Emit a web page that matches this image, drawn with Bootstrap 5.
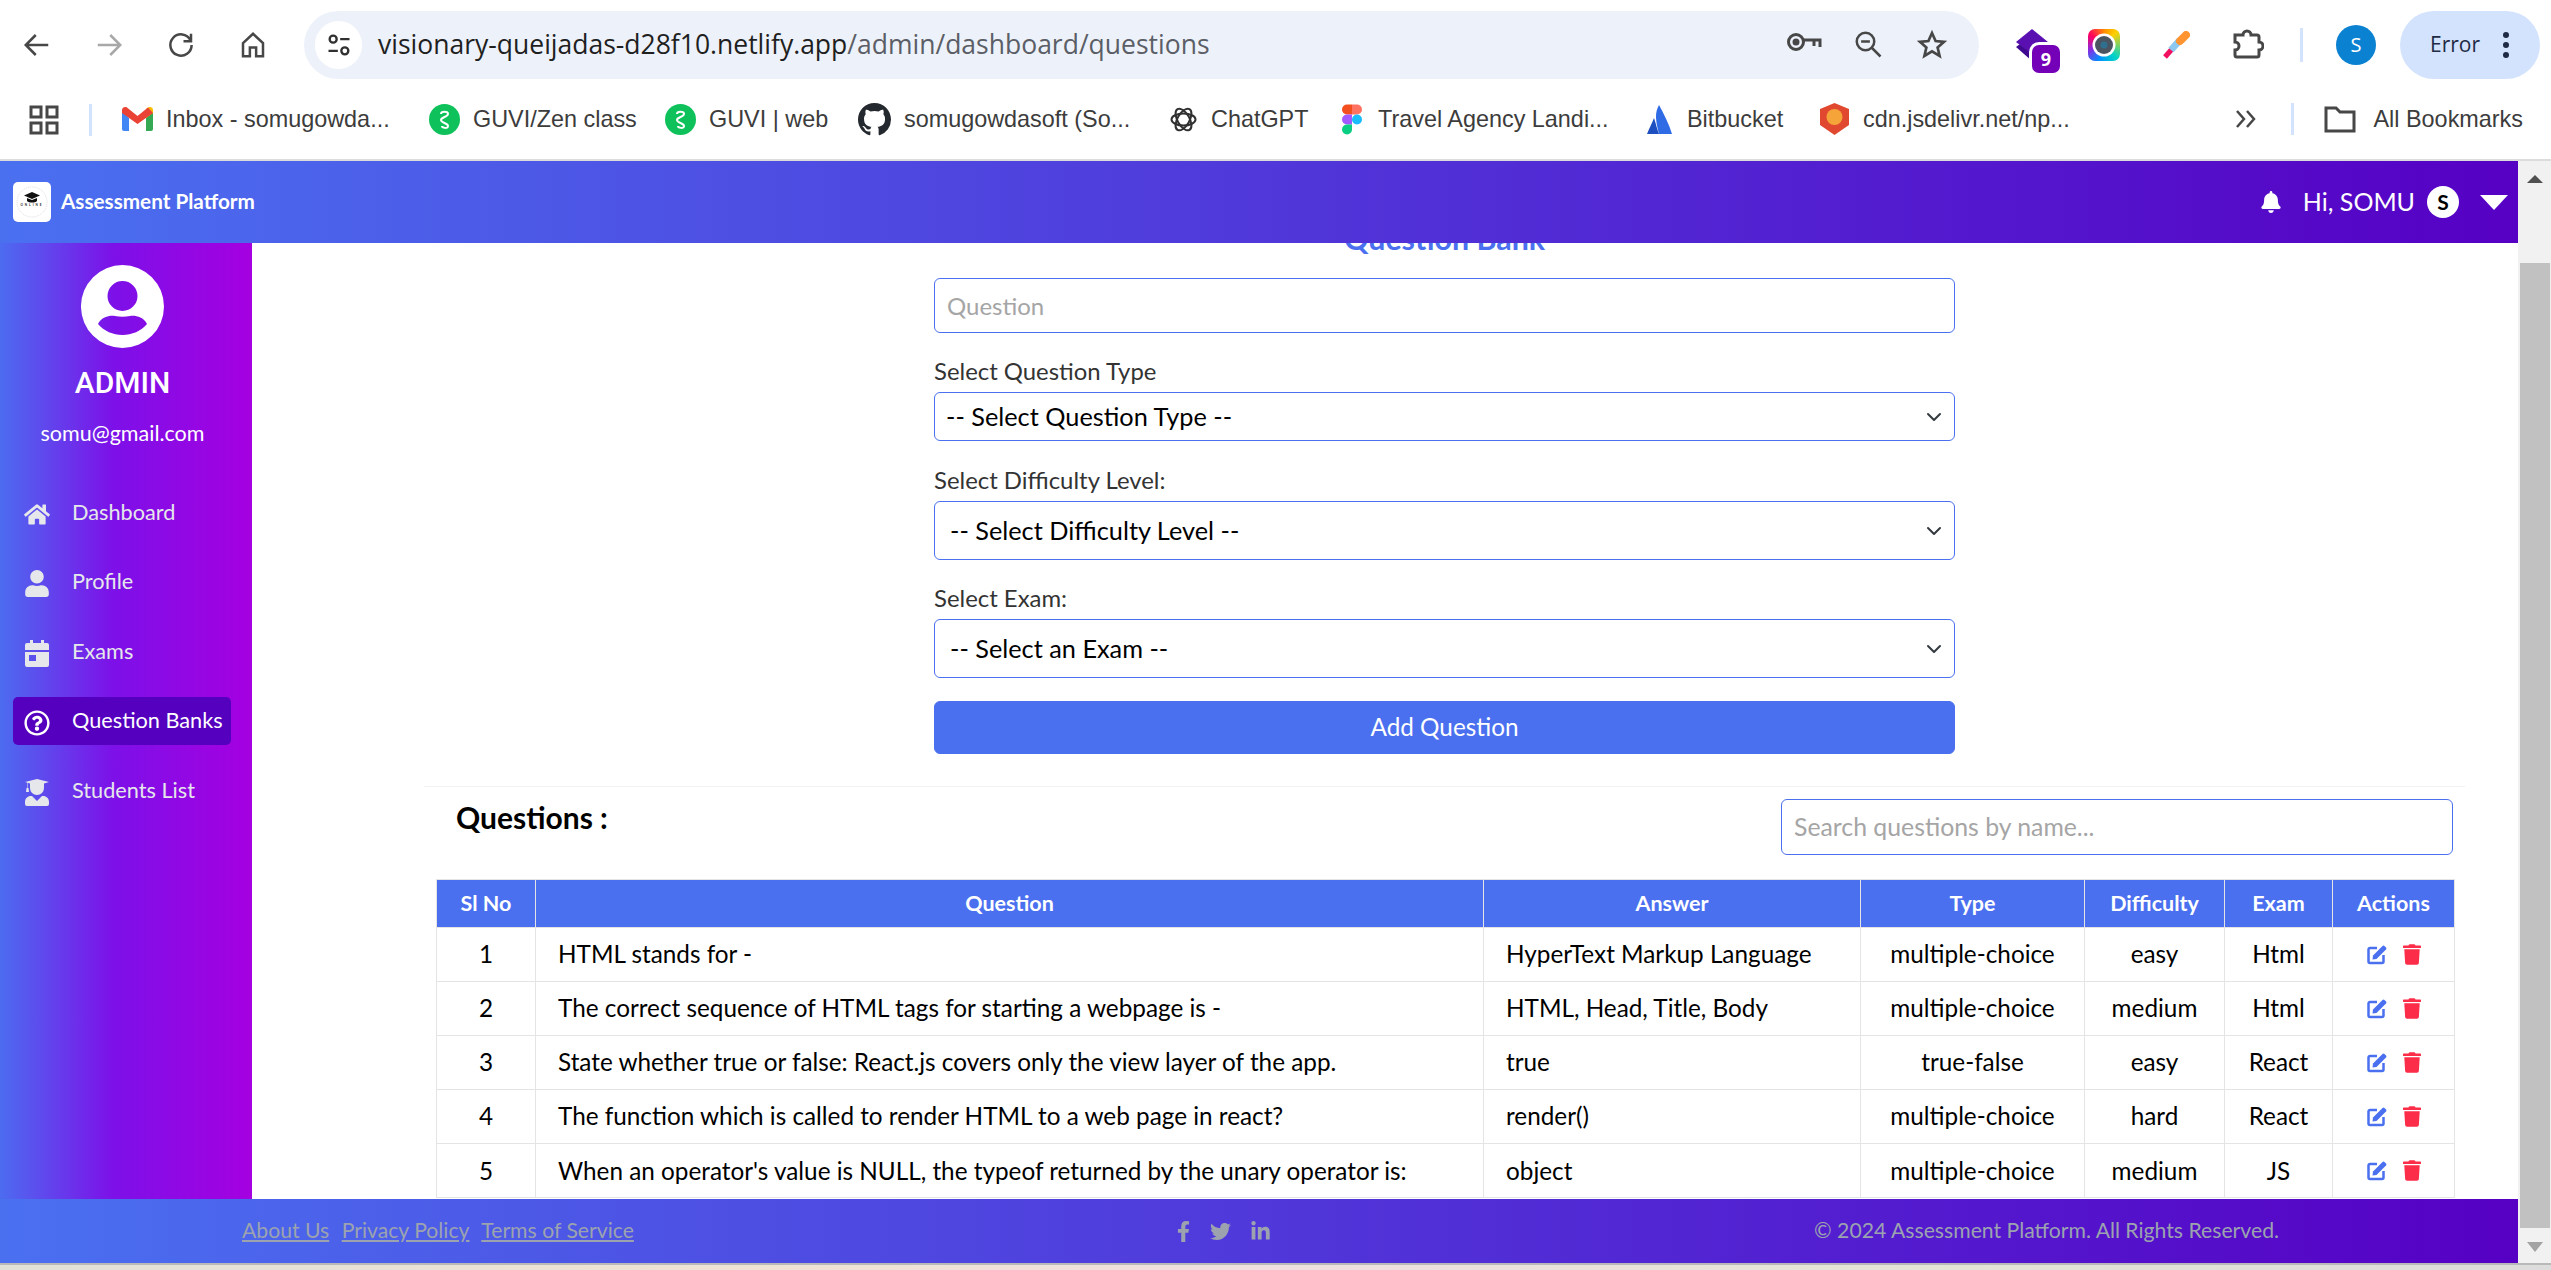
<!DOCTYPE html>
<html lang="en">
  <head>
    <meta charset="UTF-8" />
    <meta name="viewport" content="width=device-width, initial-scale=1" />
    <title>Question Bank</title>
    <link href="https://cdn.jsdelivr.net/npm/bootstrap@5.3.0/dist/css/bootstrap.min.css" rel="stylesheet" />
    <style>
      html, body { height: 100%; overflow: hidden; }
      body { font-family: Lato, "Liberation Sans", sans-serif; background: #fff; color: #000; }
      .screen { height: 100vh; }
      .fill-y { min-height: 0; }
      .fill-x { min-width: 0; }

      /* browser chrome */
      .tabbar { height: 90px; flex: none; font-family: "Open Sans", "Liberation Sans", sans-serif; }
      .tb-slot { width: 72px; flex: none; color: #474747; }
      .tb-first { margin-left: 1px; }
      .addr { width: 1675px; height: 68px; flex: none; margin-left: 15px; background: #edf2fa; border-radius: 34px; padding: 0 15px 0 11px; }
      .addr-site { width: 47px; height: 48px; background: #fff; border-radius: 24px; flex: none; }
      .addr-url { margin-left: 16px; font-size: 26.5px; color: #1f1f1f; white-space: nowrap; }
      .addr-url span { color: #5b5e66; }
      .addr-slot { width: 64px; color: #474747; }
      .ext-row { margin-left: 17px; }
      .ext-badge { position: absolute; right: 8px; bottom: -12px; width: 28px; height: 28px; background: #7400b8; color: #fff; border-radius: 7px; box-shadow: 0 0 0 3px #fff; font-size: 18px; font-weight: 700; line-height: 28px; text-align: center; }
      .cam-ico { width: 32px; height: 32px; border-radius: 7px; background: conic-gradient(#ff8c00, #ffd000 12%, #00d4c8 38%, #0090ff 55%, #8a2be2 70%, #ff0060 85%, #ff8c00); }
      .tb-sep { width: 3px; height: 34px; background: #d3e3fd; margin: 0 33px 0 16px; flex: none; }
      .acct { width: 40px; height: 40px; border-radius: 50%; background: #0b82d1; color: #fff; font-size: 20px; line-height: 40px; text-align: center; flex: none; }
      .err-pill { width: 140px; height: 68px; margin-left: 24px; flex: none; background: #d3e3fd; border-radius: 34px; color: #1f2a44; font-size: 21px; padding: 0 31px 0 30px; }
      .marks { height: 71px; flex: none; padding: 0 0 10px 29px; border-bottom: 2px solid #dcdcdc; font-family: "Liberation Sans", sans-serif; font-size: 23.4px; color: #3c3c3c; white-space: nowrap; }
      .mark-sep { width: 3px; height: 32px; background: #d3e3fd; margin: 0 30px 0 30px; flex: none; }
      .mark-sep-r { margin: 0 30px 0 34px; }
      .mark-item { gap: 13px; flex: none; }
      .mark-item svg { flex: none; }
      .mk-gmail { width: 307px; }
      .mk-zen { width: 236px; }
      .mk-web { width: 193px; }
      .mk-git { width: 312px; }
      .mk-gpt { width: 172px; gap: 14px; }
      .mk-fig { width: 304px; gap: 16px; }
      .mk-bit { width: 174px; gap: 14px; }
      .mk-cdn { gap: 14px; }
      .mark-end { margin-left: 18px; margin-right: 28px; }

      /* app */
      .app-bar { height: 82px; flex: none; background: linear-gradient(90deg, #4a70f0, #5600c4); color: #fff; padding: 0 10px 0 13px; }
      .app-logo { width: 38px; height: 40px; background: #fff; border-radius: 5px; flex: none; }
      .app-name { margin-left: 10px; font-size: 20.7px; font-weight: 700; }
      .hi-name { font-size: 25px; margin-left: 22px; }
      .hi-circle { width: 32px; height: 32px; background: #fff; color: #000; border-radius: 50%; font-weight: 700; font-size: 21px; line-height: 32px; text-align: center; margin-left: 12px; }
      .hi-caret { width: 0; height: 0; border-left: 14px solid transparent; border-right: 14px solid transparent; border-top: 15px solid #fff; margin-left: 21px; }
      .side { width: 252px; flex: none; background: linear-gradient(90deg, #4c6cf0, #7d10e8 45%, #a500e0); color: #fff; padding-top: 22px; }
      .side-top { padding-right: 7px; }
      .side-name { font-family: Roboto, "Liberation Sans", sans-serif; font-size: 30px; font-weight: 500; line-height: 36px; margin-top: 17px; }
      .side-mail { font-size: 21.5px; line-height: 28px; margin-top: 18px; margin-bottom: 41px; }
      .side-link { height: 48px; margin: 0 21px 21.5px 13px; padding-left: 11px; gap: 22px; border-radius: 5px; color: #e5e7eb; font-size: 21.7px; text-decoration: none; white-space: nowrap; }
      .side-link.is-on { background: #5500bf; color: #fff; }
      .side-ico { width: 26px; text-align: center; flex: none; }
      .page-main { overflow: hidden; min-width: 0; }
      .page-inner { margin: 0 53px 0 172px; }
      .bank-title { font-size: 30.4px; line-height: 40px; margin: -25px 0 20px; color: #4a70f0; font-weight: 700; text-align: center; }
      .bank-form { width: 1021px; margin: 0 auto; }
      .bank-form .form-label { display: block; height: 34px; font-size: 23.9px; color: #333; line-height: 34px; margin: -4px 0 4px; }
      .bank-form .form-control, .bank-form .form-select, .find-box { border: 1px solid #4a70f0; border-radius: 6px; color: #000; }
      .bank-form .form-select { font-size: 25.3px; background-position: right 10px center; background-size: 20px 16px; }
      .bank-form .form-control { height: 55px; padding: 0 12px; margin-bottom: 25px; font-size: 24px; }
      .sel-a { height: 49px; padding: 0 40px 0 11px; margin-bottom: 26px; }
      .sel-b { height: 59px; padding: 0 40px 0 15px; margin-bottom: 25px; }
      .bank-form .sel-c { margin-bottom: 22.5px; }
      .form-control::placeholder { color: #a5a5a5; }
      .add-btn { height: 53px; background: #4a70f0; border-color: #4a70f0; color: #fff; border-radius: 6px; font-size: 24.3px; padding: 0; }
      .bank-rule { margin: 32px 0 12px; border-color: #cfcfcf; }
      .list-head { padding: 0 12px 0 32px; margin-bottom: 24px; }
      .list-title { font-size: 30px; font-weight: 700; line-height: 36px; margin: 0; }
      .find-box { width: 672px !important; height: 56px; padding: 0 12px; font-size: 24.8px; }
      .q-wrap { margin: 0 12px; }
      .q-table { table-layout: fixed; width: 2018px; margin: 0; font-size: 24.3px; color: #000; border-color: #e4e4e4; }
      .q-table th { height: 48px; background: #4a70f0; color: #fff; font-size: 21.5px; font-weight: 700; text-align: center; vertical-align: middle; padding: 0; border-color: #e4e4e4; }
      .q-table td { height: 54.2px; vertical-align: middle; padding: 0 22px; white-space: nowrap; }
      .q-table td.mid { text-align: center; padding: 0; }
      .c-no { width: 99px; } .c-q { width: 948px; } .c-ans { width: 377px; } .c-type { width: 224px; } .c-diff { width: 140px; } .c-exam { width: 108px; } .c-act { width: 122px; }
      .act-cell { gap: 15px; }
      .app-foot { height: 64px; flex: none; background: linear-gradient(90deg, #4a70f0, #5600c4); color: #9ca3af; padding: 0 239px 0 242px; font-size: 21.2px; }
      .app-foot a { color: #9ca3af; margin-right: 7px; }
      .foot-links { white-space: nowrap; }
      .foot-links a:last-child { margin-right: 0; }
      .foot-social { gap: 20px; width: 100px; }

      /* fake scrollbar */
      .sbar { width: 33px; flex: none; background: #f1f1f1; position: relative; }
      .sbar-up, .sbar-down { position: absolute; left: 9px; }
      .sbar-up { top: 14px; }
      .sbar-down { bottom: 11px; }
      .sbar-thumb { height: 965px; margin: 102px 1px 0 2px; background: #c1c1c1; }
      .desk-strip { height: 7px; flex: none; border-top: 2px solid #b9b9b9; background: linear-gradient(90deg, #e1e1d8, #efe3d4 30%, #efdfe0 50%, #e3e6d6 75%, #dcdcdc); }
    </style>
  </head>
  <body>
    <div class="screen d-flex flex-column">
      <!-- tab strip -->
      <div class="tabbar d-flex align-items-center">
        <div class="tb-slot tb-first d-flex justify-content-center">
          <svg width="30" height="30" viewBox="0 0 24 24" fill="none" stroke="currentColor" stroke-width="2"><path d="M21 12H4M11 4l-8 8 8 8"/></svg>
        </div>
        <div class="tb-slot d-flex justify-content-center">
          <svg width="30" height="30" viewBox="0 0 24 24" fill="none" stroke="#a8a8a8" stroke-width="2"><path d="M3 12h17M13 4l8 8-8 8"/></svg>
        </div>
        <div class="tb-slot d-flex justify-content-center">
          <svg width="30" height="30" viewBox="0 0 24 24" fill="none" stroke="currentColor" stroke-width="2"><path d="M19.5 8A8.5 8.5 0 1 0 20.5 12"/><path d="M20 3v6h-6"/></svg>
        </div>
        <div class="tb-slot d-flex justify-content-center">
          <svg width="30" height="30" viewBox="0 0 24 24" fill="none" stroke="currentColor" stroke-width="2"><path d="M4 10.5 12 3l8 7.5V21h-5.500v-7h-5v7H4z"/></svg>
        </div>
        <div class="addr d-flex align-items-center">
          <div class="addr-site d-flex align-items-center justify-content-center">
            <svg width="28" height="28" viewBox="0 0 24 24" fill="none" stroke="#303030" stroke-width="2"><circle cx="7" cy="7" r="3"/><path d="M13 7h8M3 17h8"/><circle cx="17" cy="17" r="3"/></svg>
          </div>
          <div class="addr-url">visionary-queijadas-d28f10.netlify.app<span>/admin/dashboard/questions</span></div>
          <div class="ms-auto d-flex">
            <div class="addr-slot d-flex justify-content-center">
              <svg width="36" height="26" viewBox="0 0 36 26" fill="none" stroke="currentColor" stroke-width="3"><circle cx="10" cy="13" r="7.500"/><circle cx="10" cy="13" r="2" fill="currentColor"/><path d="M18 11h16v7M28 11v6"/></svg>
            </div>
            <div class="addr-slot d-flex justify-content-center">
              <svg width="30" height="30" viewBox="0 0 24 24" fill="none" stroke="currentColor" stroke-width="2"><circle cx="10" cy="10" r="7"/><path d="M6.500 10h7M15 15l7 7"/></svg>
            </div>
            <div class="addr-slot d-flex justify-content-center">
              <svg width="32" height="32" viewBox="0 0 24 24" fill="none" stroke="currentColor" stroke-width="2"><path d="m12 3 2.700 6 6.300.6-4.800 4.200 1.500 6.400L12 16.800l-5.700 3.400 1.500-6.400L3 9.600 9.300 9z"/></svg>
            </div>
          </div>
        </div>
        <div class="ext-row d-flex align-items-center">
          <div class="tb-slot d-flex justify-content-center position-relative">
            <svg width="32" height="32" viewBox="0 0 32 32"><path d="M0 18l4-3 12 9 12-9 4 3-16 14z" fill="#3f0a90"/><path d="M16 0 32 13 16 25 0 13z" fill="#5a10b0"/></svg>
            <div class="ext-badge">9</div>
          </div>
          <div class="tb-slot d-flex justify-content-center">
            <div class="cam-ico">
              <svg width="32" height="32" viewBox="0 0 32 32"><circle cx="16" cy="16" r="11.500" fill="#fff"/><circle cx="16" cy="16" r="9" fill="#4a5561"/><circle cx="16" cy="16" r="3.500" fill="#2f6f8f"/></svg>
            </div>
          </div>
          <div class="tb-slot d-flex justify-content-center">
            <svg width="28" height="28" viewBox="0 0 28 28" fill="none"><path d="M3 26l7-8" stroke="#f0105f" stroke-width="5"/><path d="M9 19l9-10" stroke="#8cc8f0" stroke-width="7"/><path d="M18 10l6-6" stroke="#ff9431" stroke-width="8" stroke-linecap="round"/></svg>
          </div>
          <div class="tb-slot d-flex justify-content-center">
            <svg width="32" height="34" viewBox="0 0 32 34" fill="none" stroke="currentColor" stroke-width="3"><path d="M3 7h8a4 4 0 0 1 8 0h6a2 2 0 0 1 2 2v5a4 4 0 0 1 0 8v5a2 2 0 0 1-2 2H5a2 2 0 0 1-2-2v-5a4 4 0 0 0 0-8z"/></svg>
          </div>
        </div>
        <div class="tb-sep"></div>
        <div class="acct">S</div>
        <div class="err-pill d-flex align-items-center justify-content-between">
          <span>Error</span>
          <svg width="6" height="26" viewBox="0 0 6 26" fill="#1f2a44"><circle cx="3" cy="3" r="3"/><circle cx="3" cy="13" r="3"/><circle cx="3" cy="23" r="3"/></svg>
        </div>
      </div>

      <!-- bookmarks -->
      <div class="marks d-flex align-items-center">
        <svg width="30" height="30" viewBox="0 0 30 30" fill="none" stroke="#474747" stroke-width="3"><rect x="2" y="2" width="10" height="10"/><rect x="18" y="2" width="10" height="10"/><rect x="2" y="18" width="10" height="10"/><rect x="18" y="18" width="10" height="10"/></svg>
        <div class="mark-sep"></div>
        <div class="mark-item mk-gmail d-flex align-items-center">
          <svg width="31" height="24" viewBox="0 0 31 24"><path d="M0 3v19a2 2 0 0 0 2 2h5V11z" fill="#4285f4"/><path d="M31 3v19a2 2 0 0 1-2 2h-5V11z" fill="#34a853"/><path d="M24 2v9l7-5V3c0-2.500-3-4-5-2.500z" fill="#fbbc04"/><path d="M0 6l15.500 11L31 6 26 .5 15.500 9 5 .5C3-.5 0 .500 0 3z" fill="#ea4335"/></svg>
          <span>Inbox - somugowda...</span>
        </div>
        <div class="mark-item mk-zen d-flex align-items-center">
          <svg width="31" height="31" viewBox="0 0 31 31"><circle cx="15.500" cy="15.500" r="15.500" fill="#0fc15a"/><path d="M12 10c0-3 7-3 7 0s-7 3-7 6 7 3 7 6-6 2-6 0" fill="none" stroke="#fff" stroke-width="2"/></svg>
          <span>GUVI/Zen class</span>
        </div>
        <div class="mark-item mk-web d-flex align-items-center">
          <svg width="31" height="31" viewBox="0 0 31 31"><circle cx="15.500" cy="15.500" r="15.500" fill="#0fc15a"/><path d="M12 10c0-3 7-3 7 0s-7 3-7 6 7 3 7 6-6 2-6 0" fill="none" stroke="#fff" stroke-width="2"/></svg>
          <span>GUVI | web</span>
        </div>
        <div class="mark-item mk-git d-flex align-items-center">
          <svg width="33" height="33" viewBox="0 0 16 16" fill="#24292f"><path d="M8 0C3.58 0 0 3.58 0 8c0 3.54 2.29 6.53 5.47 7.59.4.07.55-.17.55-.38 0-.19-.01-.82-.01-1.49-2.01.37-2.53-.49-2.69-.94-.09-.23-.48-.94-.82-1.13-.28-.15-.68-.52-.01-.53.63-.01 1.08.58 1.23.82.72 1.21 1.87.87 2.33.66.07-.52.28-.87.51-1.07-1.78-.2-3.64-.89-3.64-3.95 0-.87.31-1.59.82-2.15-.08-.2-.36-1.02.08-2.12 0 0 .67-.21 2.2.82.64-.18 1.32-.27 2-.27.68 0 1.36.09 2 .27 1.53-1.04 2.2-.82 2.2-.82.44 1.1.16 1.92.08 2.12.51.56.82 1.27.82 2.15 0 3.07-1.87 3.75-3.65 3.95.29.25.54.73.54 1.48 0 1.07-.01 1.93-.01 2.2 0 .21.15.46.55.38A8.012 8.012 0 0 0 16 8c0-4.420-3.58-8-8-8z"/></svg>
          <span>somugowdasoft (So...</span>
        </div>
        <div class="mark-item mk-gpt d-flex align-items-center">
          <svg width="27" height="27" viewBox="0 0 27 27" fill="none" stroke="#303030" stroke-width="2"><ellipse cx="13.500" cy="13.500" rx="12" ry="6"/><ellipse cx="13.500" cy="13.500" rx="12" ry="6" transform="rotate(60 13.500 13.500)"/><ellipse cx="13.500" cy="13.500" rx="12" ry="6" transform="rotate(120 13.500 13.500)"/></svg>
          <span>ChatGPT</span>
        </div>
        <div class="mark-item mk-fig d-flex align-items-center">
          <svg width="20" height="31" viewBox="0 0 20 30"><path d="M5 0h5v10H5a5 5 0 0 1 0-10z" fill="#f24e1e"/><path d="M10 0h5a5 5 0 0 1 0 10h-5z" fill="#ff7262"/><path d="M5 10h5v10H5a5 5 0 0 1 0-10z" fill="#a259ff"/><circle cx="15" cy="15" r="5" fill="#1abcfe"/><path d="M5 20h5v5a5 5 0 1 1-5-5z" fill="#0acf83"/></svg>
          <span>Travel Agency Landi...</span>
        </div>
        <div class="mark-item mk-bit d-flex align-items-center">
          <svg width="27" height="30" viewBox="0 0 27 30"><path d="M13 1c-4 7-4 14 0 29H26C23 20 18 10 13 1z" fill="#2f6be5"/><path d="M8 14c-2 5-5 11-7 16h12c-2-5-3-10-5-16z" fill="#1d4fc0"/></svg>
          <span>Bitbucket</span>
        </div>
        <div class="mark-item mk-cdn d-flex align-items-center">
          <svg width="29" height="32" viewBox="0 0 29 32"><path d="M14.500 0 29 6v16l-14.500 10L0 22V6z" fill="#e0492f"/><circle cx="14.500" cy="14" r="8" fill="#f5a43a"/></svg>
          <span>cdn.jsdelivr.net/np...</span>
        </div>
        <div class="ms-auto d-flex align-items-center">
          <svg width="22" height="20" viewBox="0 0 22 20" fill="none" stroke="#474747" stroke-width="2.500"><path d="M2 2l7 8-7 8M12 2l7 8-7 8"/></svg>
          <div class="mark-sep mark-sep-r"></div>
          <svg width="32" height="28" viewBox="0 0 32 28" fill="none" stroke="#474747" stroke-width="3"><path d="M2 3h10l4 4h14v19H2z"/></svg>
          <span class="mark-end">All Bookmarks</span>
        </div>
      </div>

      <div class="d-flex flex-grow-1 fill-y">
        <div class="d-flex flex-column flex-grow-1 fill-x">
          <nav class="app-bar d-flex align-items-center">
            <div class="app-logo d-flex align-items-center justify-content-center">
              <svg width="34" height="34" viewBox="0 0 34 34"><circle cx="17" cy="17" r="15" fill="none" stroke="#bbb" stroke-width=".5" stroke-dasharray="1 1"/><path d="M17 7l8 3.500-8 3.500-8-3.500z" fill="#111"/><path d="M12 13v3c2 2 8 2 10 0v-3l-5 2z" fill="#111"/><text x="17" y="21" font-size="3" text-anchor="middle" letter-spacing="2" font-weight="700" fill="#222">ONLINE</text></svg>
            </div>
            <div class="app-name">Assessment Platform</div>
            <div class="ms-auto d-flex align-items-center">
              <svg width="20" height="22" viewBox="0 0 448 512" fill="#fff"><path d="M224 512c35.32 0 63.97-28.65 63.97-64H160.03c0 35.35 28.65 64 63.97 64zm215.39-149.71c-19.32-20.76-55.47-51.99-55.47-154.29 0-77.7-54.48-139.9-127.94-155.16V32c0-17.67-14.32-32-31.98-32s-31.98 14.33-31.98 32v20.84C118.56 68.1 64.08 130.3 64.08 208c0 102.3-36.15 133.53-55.47 154.29-6 6.45-8.66 14.16-8.61 21.71.11 16.4 12.98 32 32.1 32h383.8c19.12 0 32-15.6 32.1-32 .05-7.55-2.61-15.27-8.61-21.71z"/></svg>
              <span class="hi-name">Hi, SOMU</span>
              <span class="hi-circle">S</span>
              <span class="hi-caret"></span>
            </div>
          </nav>

          <div class="d-flex flex-grow-1 fill-y">
            <aside class="side">
              <div class="side-top text-center">
                <svg width="83" height="83" viewBox="0 0 83 83" fill="#fff"><path fill-rule="evenodd" d="M41.500 0a41.500 41.500 0 1 0 0 83 41.500 41.500 0 0 0 0-83zm0 16a15 15 0 1 1 0 30 15 15 0 0 1 0-30zM17 59c4-8 13-9 17-8 5 1 10 1 15 0 4-1 13 0 17 8-6 7-15 11-24.500 11S23 66 17 59z"/></svg>
                <div class="side-name">ADMIN</div>
                <div class="side-mail">somu@gmail.com</div>
              </div>
              <a class="side-link d-flex align-items-center" href="#">
                <span class="side-ico"><svg width="26" height="23" viewBox="0 0 576 512" fill="currentColor"><path d="M280.37 148.26L96 300.11V464a16 16 0 0 0 16 16l112.06-.29a16 16 0 0 0 15.92-16V368a16 16 0 0 1 16-16h64a16 16 0 0 1 16 16v95.64a16 16 0 0 0 16 16.05L464 480a16 16 0 0 0 16-16V300L295.67 148.26a12.19 12.19 0 0 0-15.3 0zM571.6 251.47L488 182.56V44.05a12 12 0 0 0-12-12h-56a12 12 0 0 0-12 12v72.61L318.47 43a48 48 0 0 0-61 0L4.34 251.47a12 12 0 0 0-1.6 16.9l25.5 31A12 12 0 0 0 45.15 301l235.22-193.74a12.19 12.19 0 0 1 15.3 0L530.9 301a12 12 0 0 0 16.9-1.6l25.5-31a12 12 0 0 0-1.7-16.93z"/></svg></span>
                Dashboard
              </a>
              <a class="side-link d-flex align-items-center" href="#">
                <span class="side-ico"><svg width="24" height="27" viewBox="0 0 448 512" fill="currentColor"><path d="M224 256c70.7 0 128-57.3 128-128S294.7 0 224 0 96 57.3 96 128s57.3 128 128 128zm89.6 32h-16.7c-22.2 10.2-46.9 16-72.9 16s-50.6-5.8-72.9-16h-16.7C60.2 288 0 348.2 0 422.4V464c0 26.5 21.5 48 48 48h352c26.5 0 48-21.5 48-48v-41.6c0-74.2-60.2-134.4-134.4-134.4z"/></svg></span>
                Profile
              </a>
              <a class="side-link d-flex align-items-center" href="#">
                <span class="side-ico"><svg width="24" height="27" viewBox="0 0 24 27" fill="currentColor"><path fill-rule="evenodd" d="M5 0h3v3h8V0h3v3h3a2 2 0 0 1 2 2v5H0V5a2 2 0 0 1 2-2h3zM0 12h24v13a2 2 0 0 1-2 2H2a2 2 0 0 1-2-2zm4 3v6h7v-6z"/></svg></span>
                Exams
              </a>
              <a class="side-link is-on d-flex align-items-center" href="#">
                <span class="side-ico"><svg width="26" height="26" viewBox="0 0 512 512" fill="currentColor"><path d="M256 8C119.043 8 8 119.083 8 256c0 136.997 111.043 248 248 248s248-111.003 248-248C504 119.083 392.957 8 256 8zm0 448c-110.532 0-200-89.431-200-200 0-110.5 89.471-200 200-200 110.53 0 200 89.431 200 200 0 110.569-89.431 200-200 200zm107.244-255.2c0 67.052-72.421 68.084-72.421 92.863V300c0 6.627-5.373 12-12 12h-45.647c-6.627 0-12-5.373-12-12v-8.659c0-35.745 27.1-50.034 47.579-61.516 17.561-9.845 28.324-16.541 28.324-29.579 0-17.246-21.999-28.693-39.784-28.693-23.189 0-33.894 10.977-48.942 29.969-4.057 5.12-11.46 6.071-16.666 2.124l-27.824-21.098c-5.107-3.872-6.251-11.066-2.644-16.363C184.846 131.491 214.94 112 261.794 112c49.071 0 101.45 38.304 101.45 88.8zM298 368c0 23.159-18.841 42-42 42s-42-18.841-42-42 18.841-42 42-42 42 18.841 42 42z"/></svg></span>
                Question Banks
              </a>
              <a class="side-link d-flex align-items-center" href="#">
                <span class="side-ico"><svg width="24" height="27" viewBox="0 0 24 27" fill="currentColor"><path fill-rule="evenodd" d="M12 0l12 3-5 1.500V9a7 7 0 0 1-14 0V4.500L2.500 3.800V9H3.500L4 13H1l.5-4h.5V3.500L0 3zM7 17l5 5 5-5h1c3.500 0 6 2.500 6 6v2a2 2 0 0 1-2 2H2a2 2 0 0 1-2-2v-2c0-3.500 2.500-6 6-6z"/></svg></span>
                Students List
              </a>
            </aside>

            <main class="page-main flex-grow-1">
              <div class="page-inner">
                <h2 class="bank-title">Question Bank</h2>
                <form class="bank-form" onsubmit="return false">
                  <input type="text" class="form-control" placeholder="Question" />
                  <label class="form-label">Select Question Type</label>
                  <select class="form-select sel-a">
                    <option>-- Select Question Type --</option>
                  </select>
                  <label class="form-label">Select Difficulty Level:</label>
                  <select class="form-select sel-b">
                    <option>-- Select Difficulty Level --</option>
                  </select>
                  <label class="form-label">Select Exam:</label>
                  <select class="form-select sel-b sel-c">
                    <option>-- Select an Exam --</option>
                  </select>
                  <button type="submit" class="btn add-btn w-100">Add Question</button>
                </form>
                <hr class="bank-rule" />
                <div class="list-head d-flex justify-content-between align-items-start">
                  <h3 class="list-title">Questions :</h3>
                  <input type="text" class="form-control find-box" placeholder="Search questions by name..." />
                </div>
                <div class="q-wrap">
                  <table class="table table-bordered q-table">
                    <colgroup>
                      <col class="c-no" /><col class="c-q" /><col class="c-ans" /><col class="c-type" /><col class="c-diff" /><col class="c-exam" /><col class="c-act" />
                    </colgroup>
                    <thead>
                      <tr><th>Sl No</th><th>Question</th><th>Answer</th><th>Type</th><th>Difficulty</th><th>Exam</th><th>Actions</th></tr>
                    </thead>
                    <tbody id="qRows"></tbody>
                  </table>
                </div>
              </div>
            </main>
          </div>

          <footer class="app-foot d-flex align-items-center justify-content-between">
            <div class="foot-links">
              <a href="#">About Us</a>
              <a href="#">Privacy Policy</a>
              <a href="#">Terms of Service</a>
            </div>
            <div class="foot-social d-flex align-items-center justify-content-center">
              <svg width="13" height="21" viewBox="0 0 320 512" fill="currentColor"><path d="M279.14 288l14.22-92.66h-88.91v-60.13c0-25.35 12.42-50.06 52.24-50.06h40.42V6.26S260.43 0 225.36 0c-73.22 0-121.08 44.38-121.08 124.72v70.62H22.89V288h81.39v224h100.17V288z"/></svg>
              <svg width="21" height="21" viewBox="0 0 512 512" fill="currentColor"><path d="M459.37 151.716c.325 4.548.325 9.097.325 13.645 0 138.72-105.583 298.558-298.558 298.558-59.452 0-114.68-17.219-161.137-47.106 8.447.974 16.568 1.299 25.34 1.299 49.055 0 94.213-16.568 130.274-44.832-46.132-.975-84.792-31.188-98.112-72.772 6.498.974 12.995 1.624 19.818 1.624 9.421 0 18.843-1.3 27.614-3.573-48.081-9.747-84.143-51.98-84.143-102.985v-1.299c13.969 7.797 30.214 12.67 47.431 13.319-28.264-18.843-46.781-51.005-46.781-87.391 0-19.492 5.197-37.36 14.294-52.954 51.655 63.675 129.3 105.258 216.365 109.807-1.624-7.797-2.599-15.918-2.599-24.04 0-57.828 46.782-104.934 104.934-104.934 30.213 0 57.502 12.67 76.67 33.137 23.715-4.548 46.456-13.32 66.599-25.34-7.798 24.366-24.366 44.833-46.782 58.128 21.816-2.273 42.284-8.447 60.152-16.568-13.319 19.492-30.214 37.36-49.056 50.355z"/></svg>
              <svg width="19" height="21" viewBox="0 0 448 512" fill="currentColor"><path d="M100.28 448H7.4V148.9h92.88zM53.79 108.1C24.09 108.1 0 83.5 0 53.8a53.79 53.79 0 0 1 107.58 0c0 29.7-24.1 54.3-53.79 54.3zM447.9 448h-92.68V302.4c0-34.7-.7-79.2-48.29-79.2-48.29 0-55.69 37.7-55.69 76.7V448h-92.78V148.9h89.08v40.8h1.3c12.4-23.5 42.69-48.3 87.88-48.3 94 0 111.28 61.9 111.28 142.3V448z"/></svg>
            </div>
            <div class="text-nowrap">© 2024 Assessment Platform. All Rights Reserved.</div>
          </footer>
        </div>
        <div class="sbar">
          <svg class="sbar-up" width="16" height="8" viewBox="0 0 16 8" fill="#505050"><path d="M8 0l8 8H0z"/></svg>
          <div class="sbar-thumb"></div>
          <svg class="sbar-down" width="16" height="10" viewBox="0 0 16 10" fill="#a3a3a3"><path d="M8 10L0 0h16z"/></svg>
        </div>
      </div>
      <div class="desk-strip"></div>
    </div>

    <script src="https://cdn.jsdelivr.net/npm/bootstrap@5.3.0/dist/js/bootstrap.bundle.min.js"></script>
    <script>
      const questions = [
        ["HTML stands for -", "HyperText Markup Language", "multiple-choice", "easy", "Html"],
        ["The correct sequence of HTML tags for starting a webpage is -", "HTML, Head, Title, Body", "multiple-choice", "medium", "Html"],
        ["State whether true or false: React.js covers only the view layer of the app.", "true", "true-false", "easy", "React"],
        ["The function which is called to render HTML to a web page in react?", "render()", "multiple-choice", "hard", "React"],
        ["When an operator's value is NULL, the typeof returned by the unary operator is:", "object", "multiple-choice", "medium", "JS"],
      ];

      const editIcon = '<svg width="21" height="21" viewBox="0 0 21 21" fill="none"><path d="M10 4H3A1.500 1.500 0 0 0 1.500 5.500v12A1.500 1.500 0 0 0 3 19h12a1.500 1.500 0 0 0 1.500-1.500V11" stroke="#4a70f0" stroke-width="2.500"/><path d="M6 11.500 15.500 2a1.500 1.500 0 0 1 2 0l1.500 1.500a1.500 1.500 0 0 1 0 2L9.500 15 5.500 15.500z" fill="#4a70f0"/></svg>';
      const trashIcon = '<svg width="18" height="21" viewBox="0 0 448 512" fill="#fb2d48"><path d="M432 32H312l-9.4-18.7A24 24 0 0 0 281.1 0H166.8a23.72 23.72 0 0 0-21.4 13.3L136 32H16A16 16 0 0 0 0 48v32a16 16 0 0 0 16 16h416a16 16 0 0 0 16-16V48a16 16 0 0 0-16-16zM53.2 467a48 48 0 0 0 47.9 45h245.8a48 48 0 0 0 47.9-45L416 128H32z"/></svg>';

      document.getElementById("qRows").innerHTML = questions
        .map((q, i) => `<tr>
          <td class="mid">${i + 1}</td>
          <td>${q[0]}</td>
          <td>${q[1]}</td>
          <td class="mid">${q[2]}</td>
          <td class="mid">${q[3]}</td>
          <td class="mid">${q[4]}</td>
          <td class="mid"><div class="act-cell d-flex justify-content-center align-items-center">${editIcon}${trashIcon}</div></td>
        </tr>`)
        .join("");
    </script>
  </body>
</html>
